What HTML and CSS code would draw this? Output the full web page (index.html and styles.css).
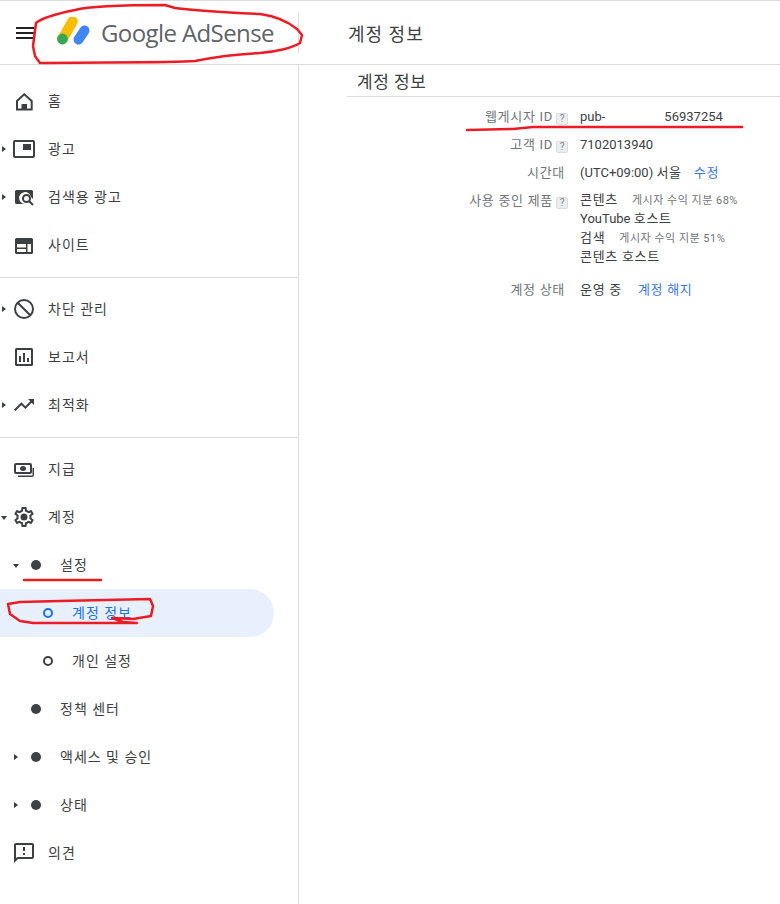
FILE: index.html
```html
<!DOCTYPE html>
<html lang="ko">
<head>
<meta charset="utf-8">
<title>계정 정보 - Google AdSense</title>
<link rel="stylesheet" href="styles.css">
</head>
<body>
<div class="page">
  <header class="topbar">
    <div class="brand">
      <svg class="menu-icon" viewBox="0 0 18 12" width="18" height="12"><path d="M0 0h18v2H0zM0 5h18v2H0zM0 10h18v2H0z"/></svg>
      <svg class="logo-mark" viewBox="0 0 44 32" width="44" height="32">
        <path d="M16.500 4.500 L6.500 22" class="bar-yellow"/>
        <circle cx="6.500" cy="22" r="5.400" class="dot-green"/>
        <path d="M28.500 13.500 L22.500 22.500" class="bar-blue"/>
      </svg>
      <span class="logo-text">Google AdSense</span>
    </div>
    <h1 class="page-title">계정 정보</h1>
  </header>
  <div class="body">
    <nav class="sidebar">
      <a class="item"><span class="icon"><svg viewBox="0 0 24 24"><path d="M12.300 5.300 5 12v8.500h14.700V12z" class="ol"/><path d="M9.500 15h5.500v6H9.500z"/></svg></span><span class="label">홈</span></a>
      <a class="item"><i class="caret right"></i><span class="icon"><svg viewBox="0 0 24 24"><path d="M19 7h-8v6h8V7zm2-4H3c-1.100 0-2 .9-2 2v14c0 1.100.9 1.980 2 1.980h18c1.100 0 2-.88 2-1.980V5c0-1.100-.9-2-2-2zm0 16.010H3V4.980h18v14.030z"/></svg></span><span class="label">광고</span></a>
      <a class="item"><i class="caret right"></i><span class="icon"><svg viewBox="0 0 24 24"><path d="M4.500 5h15A1.500 1.500 0 0 1 21 6.500V14l-2-2a6 6 0 1 0-5 7H4.500A1.500 1.500 0 0 1 3 17.500v-11A1.500 1.500 0 0 1 4.500 5z"/><circle cx="14.500" cy="13.500" r="3.500" class="ol"/><path d="M17 16l4 4" class="ol"/></svg></span><span class="label">검색용 광고</span></a>
      <a class="item"><span class="icon"><svg viewBox="0 0 24 24"><path d="M4.500 5h15A1.500 1.500 0 0 1 21 6.500v13a1.500 1.500 0 0 1-1.500 1.500h-15A1.500 1.500 0 0 1 3 19.500v-13A1.500 1.500 0 0 1 4.500 5zM5 11v3.500h9V11zm10.500 0v8H19v-8zM5 16v3h9v-3z" fill-rule="evenodd"/></svg></span><span class="label">사이트</span></a>
      <hr class="divider">
      <a class="item"><i class="caret right"></i><span class="icon"><svg viewBox="0 0 24 24"><circle cx="12" cy="12" r="9" class="ol"/><path d="M5.700 5.700l12.600 12.600" class="ol"/></svg></span><span class="label">차단 관리</span></a>
      <a class="item"><span class="icon"><svg viewBox="0 0 24 24"><path d="M4.500 3h15A1.500 1.500 0 0 1 21 4.500v15a1.500 1.500 0 0 1-1.500 1.500h-15A1.500 1.500 0 0 1 3 19.500v-15A1.500 1.500 0 0 1 4.500 3zM5 5v14h14V5z" fill-rule="evenodd"/><path d="M7 11h2v6H7zM11 8h2v9h-2zM15 13h2v4h-2z"/></svg></span><span class="label">보고서</span></a>
      <a class="item"><i class="caret right"></i><span class="icon"><svg viewBox="0 0 24 24"><path d="M16 6l2.290 2.290-4.880 4.880-4-4L2 16.590 3.410 18l6-6 4 4 6.300-6.290L22 12V6z"/></svg></span><span class="label">최적화</span></a>
      <hr class="divider">
      <a class="item"><span class="icon"><svg viewBox="0 0 24 24"><path d="M4 6h14a2 2 0 0 1 2 2v7a2 2 0 0 1-2 2H4a2 2 0 0 1-2-2V8a2 2 0 0 1 2-2zm0 2v7h14V8z" fill-rule="evenodd"/><ellipse cx="11" cy="11.500" rx="3" ry="2.500"/><path d="M22 11v7a2 2 0 0 1-2 2H6v-1.500h14.500V11z"/></svg></span><span class="label">지급</span></a>
      <a class="item"><i class="caret down"></i><span class="icon"><svg viewBox="0 0 24 24"><path d="M19.430 12.980c.04-.32.07-.64.07-.98 0-.34-.03-.66-.07-.98l2.110-1.650c.19-.15.24-.42.12-.64l-2-3.460c-.09-.16-.26-.25-.44-.25-.06 0-.12.01-.17.03l-2.490 1c-.52-.4-1.080-.73-1.690-.98l-.38-2.650C14.460 2.180 14.250 2 14 2h-4c-.25 0-.46.18-.49.42l-.38 2.650c-.61.25-1.170.59-1.690.98l-2.490-1c-.06-.02-.12-.03-.18-.03-.17 0-.34.09-.43.25l-2 3.460c-.13.22-.07.49.12.64l2.110 1.650c-.04.32-.07.65-.07.98 0 .33.03.66.07.98l-2.110 1.650c-.19.15-.24.42-.12.64l2 3.460c.09.16.26.25.44.25.06 0 .12-.01.17-.03l2.490-1c.52.4 1.080.73 1.690.98l.38 2.650c.03.24.24.42.49.42h4c.25 0 .46-.18.49-.42l.38-2.650c.61-.25 1.170-.59 1.690-.98l2.490 1c.06.02.12.03.18.03.17 0 .34-.09.43-.25l2-3.460c.12-.22.07-.49-.12-.64l-2.110-1.650zm-1.980-1.710c.04.31.05.52.05.73 0 .21-.02.43-.05.73l-.14 1.130.89.7 1.080.84-.7 1.210-1.270-.51-1.040-.42-.9.68c-.43.32-.84.56-1.250.73l-1.060.43-.16 1.130-.2 1.350h-1.400l-.19-1.350-.16-1.130-1.060-.43c-.43-.18-.83-.41-1.230-.71l-.91-.7-1.060.43-1.270.51-.7-1.210 1.080-.84.89-.7-.14-1.130c-.03-.31-.05-.54-.05-.74s.02-.43.05-.73l.14-1.130-.89-.7-1.080-.84.7-1.210 1.270.51 1.040.42.9-.68c.43-.32.84-.56 1.250-.73l1.060-.43.16-1.130.2-1.350h1.390l.19 1.350.16 1.130 1.060.43c.43.18.83.41 1.230.71l.91.7 1.060-.43 1.270-.51.7 1.210-1.070.85-.89.7.14 1.130z"/><circle cx="12" cy="12" r="3.500"/></svg></span><span class="label">계정</span></a>
      <a class="item sub"><i class="caret down"></i><span class="bullet"></span><span class="label">설정</span></a>
      <a class="item leaf active"><span class="ring"></span><span class="label">계정 정보</span></a>
      <a class="item leaf"><span class="ring"></span><span class="label">개인 설정</span></a>
      <a class="item sub"><span class="bullet"></span><span class="label">정책 센터</span></a>
      <a class="item sub"><i class="caret right"></i><span class="bullet"></span><span class="label">액세스 및 승인</span></a>
      <a class="item sub"><i class="caret right"></i><span class="bullet"></span><span class="label">상태</span></a>
      <a class="item"><span class="icon"><svg viewBox="0 0 24 24"><path d="M20 2H4c-1.100 0-1.990.9-1.990 2L2 22l4-4h14c1.100 0 2-.9 2-2V4c0-1.100-.9-2-2-2zm0 14H5.170L4 17.170V4h16v12zm-9-4h2v2h-2zm0-6h2v4h-2z"/></svg></span><span class="label">의견</span></a>
    </nav>
    <main class="main">
      <h2 class="section-title">계정 정보</h2>
      <dl class="info">
        <dt>웹게시자 ID<span class="help">?</span></dt>
        <dd class="pub"><span>pub-</span><span>56937254</span></dd>
        <dt>고객 ID<span class="help">?</span></dt>
        <dd>7102013940</dd>
        <dt class="plain">시간대</dt>
        <dd>(UTC+09:00) <span class="ko">서울</span><a class="link">수정</a></dd>
        <dt>사용 중인 제품<span class="help">?</span></dt>
        <dd class="products">
          <div><span class="ko">콘텐츠</span><small>게시자 수익 지분 68%</small></div>
          <div>YouTube <span class="ko">호스트</span></div>
          <div><span class="ko">검색</span><small>게시자 수익 지분 51%</small></div>
          <div><span class="ko">콘텐츠 호스트</span></div>
        </dd>
        <dt class="plain">계정 상태</dt>
        <dd><span class="ko">운영 중</span><a class="link wide">계정 해지</a></dd>
      </dl>
    </main>
  </div>
  <svg class="ink" viewBox="0 0 780 904" width="780" height="904">
    <path d="M75 9C90 5 130 4 165 4L175 7C190 9 215 11 260 13C275 15 287 20 297 28L302 34L300 42C292 47 275 51 260 52C240 53 215 56 195 60C170 62 90 61 40 62L35 55L33 45L36 22C42 17 60 12 75 9Z"/>
    <path d="M467 129L513 128L533 126H742"/>
    <path d="M24 579H101"/>
    <path d="M8 603L20 601L60 600L150 598L153 605L151 615L133 618L112 617L123 621L137 622L33 622L20 620L10 613Z"/>
  </svg>
</div>
</body>
</html>
```
FILE: styles.css
```css
* { box-sizing: border-box; }
html, body { margin: 0; padding: 0; background: #fff; }
body { font-family: Roboto, "Noto Sans CJK KR", sans-serif; color: #3c4043; }
.page { position: relative; width: 780px; height: 904px; overflow: hidden; border-top: 1px solid #dadce0; }
.topbar { display: flex; height: 64px; border-bottom: 1px solid #dadce0; align-items: center; }
.brand { width: 299px; height: 40px; display: flex; align-items: center; border-right: 1px solid #dadce0; padding-left: 16px; }
.menu-icon { fill: #202124; flex: none; }
.logo-mark { flex: none; margin-left: 22px; }
.bar-yellow { stroke: #fbbc04; stroke-width: 10.500; stroke-linecap: round; fill: none; }
.bar-blue { stroke: #4285f4; stroke-width: 10; stroke-linecap: round; fill: none; }
.dot-green { fill: #34a853; }
.logo-text { font-family: "Open Sans", sans-serif; font-size: 24px; font-weight: 500; color: #5f6368; margin-left: 1px; letter-spacing: -.6px; white-space: nowrap; }
.page-title { margin: 0 0 0 49px; font-size: 18px; font-weight: 400; color: #3c4043; letter-spacing: 1px; }
.body { display: flex; height: 839px; }
.sidebar { width: 299px; flex: none; border-right: 1px solid #dadce0; padding-top: 12px; }
.item { display: flex; align-items: center; height: 48px; position: relative; padding-left: 12px; font-size: 14px; letter-spacing: 1px; color: #3c4043; }
.label { margin-bottom: 2px; }
.icon { width: 24px; height: 24px; flex: none; margin-right: 12px; }
.icon svg { display: block; width: 24px; height: 24px; fill: #3c4043; }
.icon .ol { fill: none; stroke: #3c4043; stroke-width: 2; }
.divider { border: 0; border-top: 1px solid #dadce0; margin: 8px 0 7px; height: 0; }
.caret { position: absolute; width: 0; height: 0; left: 2px; top: 50%; }
.caret.right { margin-top: -3px; border-left: 4px solid #3c4043; border-top: 3px solid transparent; border-bottom: 3px solid transparent; }
.caret.down { margin-top: -1px; left: 1px; border-top: 4px solid #3c4043; border-left: 3px solid transparent; border-right: 3px solid transparent; }
.sub { padding-left: 31px; }
.sub .caret { left: 14px; }
.sub .caret.down { left: 13px; }
.bullet { width: 10px; height: 10px; border-radius: 50%; background: #3c4043; flex: none; margin-right: 19px; }
.leaf { padding-left: 43px; width: 274px; border-radius: 0 24px 24px 0; }
.ring { width: 10px; height: 10px; border-radius: 50%; border: 2px solid #3c4043; flex: none; margin-right: 19px; }
.active { background: #e8f0fe; color: #1a73e8; }
.active .ring { border-color: #1a73e8; }
.main { flex: 1; padding: 3px 0 0 48px; }
.section-title { margin: 0; font-size: 17px; font-weight: 400; line-height: 28px; padding-left: 10px; border-bottom: 1px solid #dadce0; color: #3c4043; letter-spacing: .5px; }
.info { display: grid; grid-template-columns: 221px 1fr; column-gap: 12px; row-gap: 9px; margin: 10px 0 0; font-size: 13px; line-height: 19px; }
dt { text-align: right; color: #70757a; white-space: nowrap; letter-spacing: .7px; }
dt.plain { padding-right: 3px; }
dd { margin: 0; color: #3c4043; white-space: nowrap; }
.ko { letter-spacing: .7px; }
.help { display: inline-block; width: 12px; height: 12px; line-height: 10px; margin-left: 3px; text-align: center; font-size: 10px; letter-spacing: 0; color: #80868b; background: #eceff1; border: 1px solid #dadce0; border-radius: 2px; vertical-align: -1px; }
.pub { display: flex; gap: 59px; }
.link { color: #3b78e7; margin-left: 12px; letter-spacing: .7px; }
.link.wide { margin-left: 16px; }
.products { margin-bottom: 4px; line-height: 18.400px; }
small { font-size: 11px; letter-spacing: .5px; color: #70757a; margin-left: 14px; }
.ink { position: absolute; left: 0; top: 0; pointer-events: none; fill: none; stroke: #ed1c24; stroke-width: 2.500; stroke-linejoin: round; stroke-linecap: round; }
```
